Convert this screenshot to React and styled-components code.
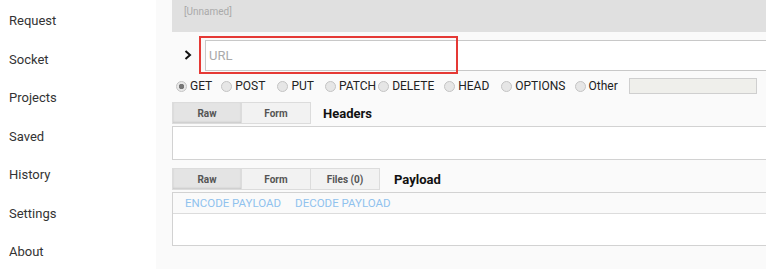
import styled, { createGlobalStyle } from "styled-components";

const GlobalStyle = createGlobalStyle`
  html, body {
    margin: 0;
    padding: 0;
    overflow: hidden;
    background: #fafafa;
    font-family: Roboto, "Liberation Sans", Arial, sans-serif;
  }
`;

const Layout = styled.div`
  display: flex;
  width: 790px;
  height: 269px;
  overflow: hidden;
`;

const Sidebar = styled.nav`
  width: 156px;
  flex-shrink: 0;
  display: flex;
  flex-direction: column;
  gap: 20.5px;
  background: #ffffff;
  padding-top: 12px;
  box-sizing: border-box;
`;

const NavItem = styled.div`
  height: 18px;
  padding-left: 9px;
  font-size: 13px;
  color: #333;
  line-height: 18px;
`;

const Main = styled.main`
  flex: 1;
  padding-left: 16px;
  background: #fafafa;
`;

const NameBar = styled.div`
  height: 32px;
  background: #e0e0e0;
  padding: 6px 0 0 12px;
  box-sizing: border-box;
  font-size: 10px;
  color: #aaa;
`;

const UrlRow = styled.div`
  position: relative;
  display: flex;
  align-items: center;
  height: 38px;
  margin-top: 4px;
`;

const Chevron = styled.svg`
  width: 8px;
  height: 10px;
  margin: 0 13px 0 12px;
`;

const UrlInput = styled.div`
  flex: 1;
  height: 31px;
  background: #fff;
  border: 1px solid #c8c8c8;
  border-right: none;
  box-sizing: border-box;
  padding-left: 3px;
  display: flex;
  align-items: center;
  font-size: 13px;
  color: #aaa;
`;

const Highlight = styled.div`
  position: absolute;
  left: 27px;
  top: 0;
  width: 259px;
  height: 38px;
  border: 2px solid #e53935;
  box-sizing: border-box;
  pointer-events: none;
`;

const MethodRow = styled.div`
  display: flex;
  align-items: center;
  height: 20px;
  padding-left: 4px;
  margin-top: 2px;
`;

const Method = styled.label`
  display: flex;
  align-items: center;
  margin-right: ${(p) => p.$gap}px;
  font-size: 12px;
  color: #222;
`;

const Radio = styled.span`
  width: 9px;
  height: 9px;
  border-radius: 50%;
  border: 1px solid #c4c4c4;
  background: ${(p) => (p.$checked ? "radial-gradient(circle, #777 0 2.5px, #e8e8e8 3px)" : "#e6e6e6")};
  margin-right: 3px;
`;

const OtherInput = styled.div`
  width: 128px;
  height: 16px;
  background: #efefeb;
  border: 1px solid #cfcfcf;
  box-sizing: border-box;
`;

const TabRow = styled.div`
  display: flex;
  align-items: center;
  margin-top: ${(p) => p.$top}px;
`;

const Tab = styled.div`
  width: 70px;
  height: 22px;
  display: flex;
  align-items: center;
  justify-content: center;
  box-sizing: border-box;
  font-size: 10px;
  font-weight: 700;
  color: #555;
  border: 1px solid #dcdcdc;
  margin-left: -1px;
  background: ${(p) => (p.$active ? "#e4e4e4" : "#f2f2f2")};
  box-shadow: ${(p) => (p.$active ? "inset 0 -1px 2px rgba(0,0,0,0.12)" : "none")};
  &:first-child {
    margin-left: 0;
  }
`;

const TabTitle = styled.div`
  margin-left: ${(p) => p.$ml}px;
  font-size: 13px;
  font-weight: 700;
  color: #111;
`;

const Box = styled.div`
  margin-top: 2px;
  background: #fff;
  border: 1px solid #d2d2d2;
  border-right: none;
  height: ${(p) => p.$h}px;
  box-sizing: border-box;
`;

const PayloadTools = styled.div`
  display: flex;
  gap: 14px;
  height: 20px;
  align-items: center;
  padding-left: 12px;
  border-bottom: 1px solid #dcdcdc;
  background: #fafafa;
  font-size: 11.5px;
  color: #90c2ee;
`;

const navItems = ["Request", "Socket", "Projects", "Saved", "History", "Settings", "About"];

const methods = [
  { name: "GET", gap: 9, checked: true },
  { name: "POST", gap: 12 },
  { name: "PUT", gap: 11 },
  { name: "PATCH", gap: 2 },
  { name: "DELETE", gap: 10 },
  { name: "HEAD", gap: 12 },
  { name: "OPTIONS", gap: 9 },
  { name: "Other", gap: 11 },
];

const App = () => {
  return (
    <>
      <GlobalStyle />
      <Layout>
        <Sidebar>
          {navItems.map((item) => (
            <NavItem key={item}>{item}</NavItem>
          ))}
        </Sidebar>
        <Main>
          <NameBar>[Unnamed]</NameBar>
          <UrlRow>
            <Chevron viewBox="0 0 8 10">
              <path d="M1.5 1 L6 5 L1.5 9" fill="none" stroke="#111" strokeWidth="2" />
            </Chevron>
            <UrlInput>URL</UrlInput>
            <Highlight />
          </UrlRow>
          <MethodRow>
            {methods.map((m) => (
              <Method key={m.name} $gap={m.gap}>
                <Radio $checked={m.checked} />
                {m.name}
              </Method>
            ))}
            <OtherInput />
          </MethodRow>
          <TabRow $top={6}>
            <Tab $active>Raw</Tab>
            <Tab>Form</Tab>
            <TabTitle $ml={12}>Headers</TabTitle>
          </TabRow>
          <Box $h={34} />
          <TabRow $top={8}>
            <Tab $active>Raw</Tab>
            <Tab>Form</Tab>
            <Tab>Files (0)</Tab>
            <TabTitle $ml={14}>Payload</TabTitle>
          </TabRow>
          <Box $h={54}>
            <PayloadTools>
              <span>ENCODE PAYLOAD</span>
              <span>DECODE PAYLOAD</span>
            </PayloadTools>
          </Box>
        </Main>
      </Layout>
    </>
  );
};

export default App;
